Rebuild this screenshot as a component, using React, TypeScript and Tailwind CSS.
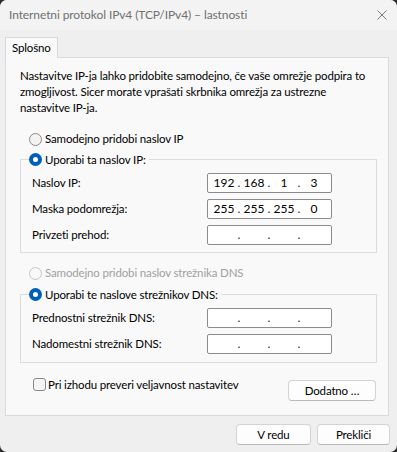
import React from "react";

const FONT = { fontFamily: "Lato, 'Noto Sans', sans-serif" };

function Radio({ state, label }: { state: "on" | "off" | "disabled"; label: string }) {
  return (
    <div className="flex items-center h-[16px]">
      {state === "on" ? (
        <span className="w-[13px] h-[13px] rounded-full bg-[#005fb8] flex items-center justify-center">
          <span className="w-[5px] h-[5px] rounded-full bg-white" />
        </span>
      ) : state === "off" ? (
        <span className="w-[13px] h-[13px] rounded-full border border-[#8a8a8a] bg-[#f3f3f3]" />
      ) : (
        <span className="w-[13px] h-[13px] rounded-full border border-[#c5c5c5] bg-[#f9f9f9]" />
      )}
      <span className={"ml-[3px] whitespace-nowrap " + (state === "disabled" ? "text-[#a0a0a0]" : "text-black")}>
        {label}
      </span>
    </div>
  );
}

function IpField({ parts }: { parts?: string[] }) {
  const p = parts ?? ["", "", "", ""];
  return (
    <div className="w-[125px] h-[20px] border border-[#8c8c8c] rounded-[2px] bg-white flex items-center pl-[3px] tracking-normal text-[12px]">
      {p.map((v, i) => (
        <React.Fragment key={i}>
          <span className="w-[26px] text-center text-black leading-none">{v}</span>
          {i < 3 && <span className="w-[4px] text-center text-[#1b1b5a] leading-none">.</span>}
        </React.Fragment>
      ))}
    </div>
  );
}

function Row({ label, parts }: { label: string; parts?: string[] }) {
  return (
    <div className="grid grid-cols-[175px_125px] items-center h-[20px]">
      <span className="whitespace-nowrap text-black">{label}</span>
      <IpField parts={parts} />
    </div>
  );
}

function Btn({ children, w }: { children: React.ReactNode; w: string }) {
  return (
    <div
      className={
        "h-[21px] rounded-[4px] border border-[#d3d3d3] border-b-[#b9b9b9] bg-[#fdfdfd] flex items-center justify-center text-black " +
        w
      }
    >
      {children}
    </div>
  );
}

export default function App() {
  return (
    <div className="w-[397px] h-[452px] bg-[#2b2b2b]" style={FONT}>
      <div className="w-[397px] h-[452px] rounded-[7px] overflow-hidden bg-[#efefef] flex flex-col text-[11.5px] leading-[16px] tracking-[-0.15px]">
        {/* Title bar */}
        <div className="h-[30px] bg-[#f3f3f3] flex items-center justify-between pl-[9px] pr-[10px] shrink-0">
          <span className="text-[#707070] text-[12px] tracking-[-0.1px] whitespace-nowrap">
            Internetni protokol IPv4 (TCP/IPv4) – lastnosti
          </span>
          <svg width="10" height="10" viewBox="0 0 10 10" className="mb-[1px]">
            <path d="M0.5 0.5 L9.5 9.5 M9.5 0.5 L0.5 9.5" stroke="#7a7a7a" strokeWidth="1" />
          </svg>
        </div>

        {/* Body */}
        <div className="pt-[7px] pl-[5px] flex flex-col">
          {/* Tab */}
          <div className="relative z-10 -mb-px w-[53px] h-[21px] border border-b-0 border-[#d9d9d9] bg-[#f9f9f9] flex items-center pl-[6px] text-black">
            Splošno
          </div>
          {/* Panel */}
          <div className="w-[384px] h-[359px] border border-[#dadada] bg-[#f9f9f9] flex flex-col pt-[10px]">
            <p className="pl-[14px] text-black whitespace-nowrap">
              Nastavitve IP-ja lahko pridobite samodejno, če vaše omrežje podpira to
              <br />
              zmogljivost. Sicer morate vprašati skrbnika omrežja za ustrezne
              <br />
              nastavitve IP-ja.
            </p>

            <div className="mt-[15px] pl-[23px]">
              <Radio state="off" label="Samodejno pridobi naslov IP" />
            </div>

            {/* Group 1 */}
            <div className="relative mt-[12px] ml-[14px] w-[357px] border border-[#dcdcdc] pt-[13px] pb-[7px] pl-[11px] flex flex-col gap-[6px]">
              <div className="absolute left-[8px] -top-[8.5px] bg-[#f9f9f9] pr-[3px]">
                <Radio state="on" label="Uporabi ta naslov IP:" />
              </div>
              <Row label="Naslov IP:" parts={["192", "168", "1", "3"]} />
              <Row label="Maska podomrežja:" parts={["255", "255", "255", "0"]} />
              <Row label="Privzeti prehod:" />
            </div>

            <div className="mt-[12px] pl-[23px]">
              <Radio state="disabled" label="Samodejno pridobi naslov strežnika DNS" />
            </div>

            {/* Group 2 */}
            <div className="relative mt-[13px] ml-[14px] w-[357px] border border-[#dcdcdc] pt-[13px] pb-[8px] pl-[11px] flex flex-col gap-[6px]">
              <div className="absolute left-[8px] -top-[8.5px] bg-[#f9f9f9] pr-[3px]">
                <Radio state="on" label="Uporabi te naslove strežnikov DNS:" />
              </div>
              <Row label="Prednostni strežnik DNS:" />
              <Row label="Nadomestni strežnik DNS:" />
            </div>

            {/* Checkbox + Dodatno */}
            <div className="mt-[15px] flex items-start justify-between pl-[27px] pr-[12px]">
              <div className="flex items-center h-[13px]">
                <span className="w-[13px] h-[13px] rounded-[3px] border border-[#8a8a8a] bg-[#f5f5f5]" />
                <span className="ml-[2px] whitespace-nowrap text-black">Pri izhodu preveri veljavnost nastavitev</span>
              </div>
              <div className="mt-[2px]">
                <Btn w="w-[88px]">Dodatno …</Btn>
              </div>
            </div>
          </div>
        </div>

        {/* Bottom buttons */}
        <div className="mt-[8px] flex justify-end gap-[6px] pr-[7px]">
          <Btn w="w-[75px]">V redu</Btn>
          <Btn w="w-[73px]">Prekliči</Btn>
        </div>
      </div>
    </div>
  );
}
